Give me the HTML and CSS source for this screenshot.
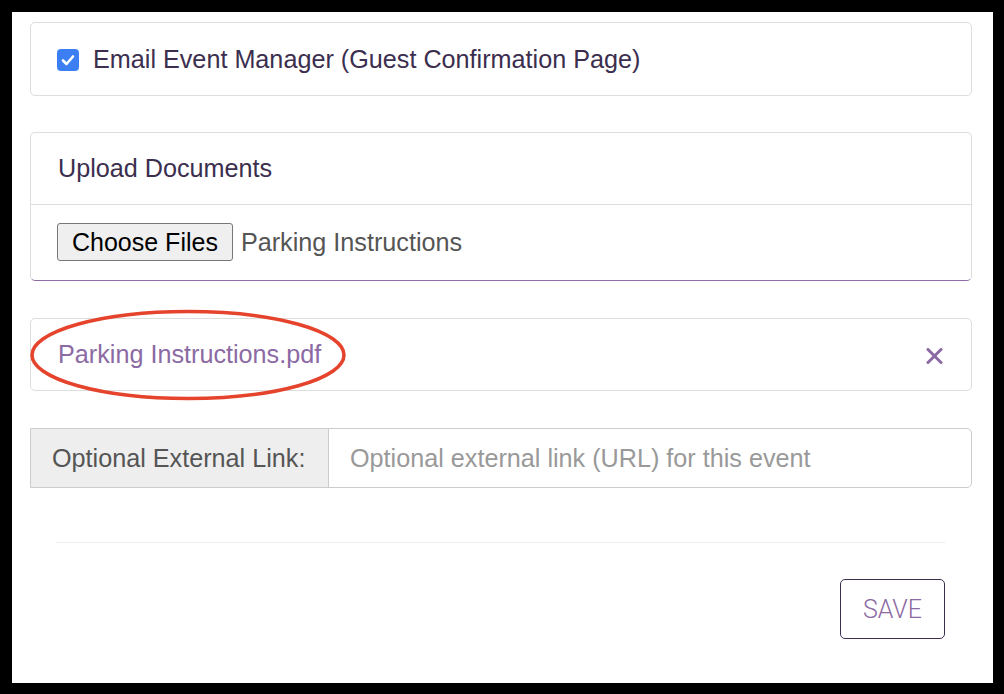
FILE: index.html
```html
<!DOCTYPE html>
<html lang="en">
<head>
  <meta charset="UTF-8" />
  <title>Event Documents</title>
  <link rel="stylesheet" href="styles.css">
</head>
<body>
  <div class="frame">
    <!-- Checkbox card -->
    <div class="card check-card">
      <span class="checkbox">
        <svg width="14" height="12" viewBox="0 0 14 12"><path d="M2 6.5 L5.5 10 L12 2.5" fill="none" stroke="#fff" stroke-width="2.6" stroke-linecap="round" stroke-linejoin="round"/></svg>
      </span>
      <span class="check-label">Email Event Manager (Guest Confirmation Page)</span>
    </div>

    <!-- Upload card -->
    <div class="card upload-card">
      <div class="card-head">Upload Documents</div>
      <div class="card-body">
        <button class="file-btn">Choose Files</button>
        <span class="file-name">Parking Instructions</span>
      </div>
    </div>

    <!-- Uploaded file -->
    <div class="card file-card">
      <a class="file-link" href="#">Parking Instructions.pdf</a>
      <svg class="remove" width="17" height="16" viewBox="0 0 17 16"><path d="M2 1.5 L15 14.5 M15 1.5 L2 14.5" stroke="#8c6aa3" stroke-width="3" stroke-linecap="round"/></svg>
      <svg class="circle" width="318" height="92" viewBox="0 0 318 92"><ellipse cx="159" cy="46" rx="156" ry="43.5" fill="none" stroke="#e5432c" stroke-width="3.5"/></svg>
    </div>

    <!-- External link -->
    <div class="input-group">
      <span class="addon">Optional External Link:</span>
      <span class="url-input">Optional external link (URL) for this event</span>
    </div>

    <div class="footer">
      <hr class="divider">
      <div class="actions">
        <button class="save-btn">SAVE</button>
      </div>
    </div>
  </div>
</body>
</html>
```

FILE: styles.css
```css
/* black frame round the white panel */
body {
  margin: 0;
  background-color: #000;
  font-family: "Liberation Sans", Arial, sans-serif;
}
.frame {
  margin: 12px 11px 11px 12px;
  height: 671px;
  box-sizing: border-box;
  background-color: #fff;
  padding: 10px 21px 0 18px;
}
/* cards */
.card {
  border: 1px solid #ddd;
  border-radius: 5px;
  background-color: #fff;
}
.check-card {
  height: 74px;
  box-sizing: border-box;
  display: flex;
  align-items: center;
  padding-left: 26px;
}
.checkbox {
  width: 22px;
  height: 22px;
  border-radius: 4px;
  background-color: #3b7ff3;
  display: flex;
  align-items: center;
  justify-content: center;
  margin-right: 14px;
  margin-top: 1px;
}
.check-label {
  font-size: 25.2px;
  color: #3b2e4e;
}
.upload-card {
  margin-top: 36px;
  border-bottom: 1px solid #8f6ba7;
}
.card-head {
  height: 72px;
  box-sizing: border-box;
  padding-left: 27px;
  display: flex;
  align-items: center;
  font-size: 25.2px;
  color: #3b2e4e;
  border-bottom: 1px solid #ddd;
}
.card-body {
  height: 75px;
  box-sizing: border-box;
  padding-left: 26px;
  display: flex;
  align-items: center;
  padding-bottom: 1px;
}
.file-btn {
  font-family: "Liberation Sans", Arial, sans-serif;
  font-size: 25px;
  color: #000;
  background-color: #efefef;
  border: 1px solid #777;
  border-radius: 3px;
  height: 38px;
  padding: 0 14px;
  margin: 0 8px 0 0;
}
.file-name {
  font-size: 25.2px;
  color: #555;
}
.file-card {
  position: relative;
  margin-top: 37px;
  height: 73px;
  box-sizing: border-box;
  display: flex;
  align-items: center;
  justify-content: space-between;
  padding: 0 28px 0 27px;
}
.file-link {
  font-size: 25.2px;
  color: #8c6aa3;
  text-decoration: none;
  margin-top: -1px;
}
.remove {
  margin-top: 2px;
}
/* red marker drawn over the link */
.circle {
  position: absolute;
  left: -2px;
  top: -10px;
}
/* input group */
.input-group {
  margin-top: 37px;
  display: flex;
  height: 60px;
  border: 1px solid #ccc;
  border-radius: 0 5px 5px 0;
  box-sizing: border-box;
}
.addon {
  width: 298px;
  box-sizing: border-box;
  background-color: #eee;
  border-right: 1px solid #ccc;
  display: flex;
  align-items: center;
  padding-left: 21px;
  font-size: 25.2px;
  color: #555;
}
.url-input {
  flex: 1;
  display: flex;
  align-items: center;
  padding-left: 21px;
  font-size: 25.2px;
  color: #999;
}
/* footer */
.footer {
  padding: 0 27px 0 26px;
}
.divider {
  border: 0;
  border-top: 1px solid #eee;
  margin: 54px 0 0;
}
.actions {
  display: flex;
  justify-content: flex-end;
  margin-top: 36px;
}
.save-btn {
  width: 105px;
  height: 60px;
  background-color: #fff;
  border: 1px solid #3b2e4e;
  border-radius: 5px;
  color: #8c6aa3;
  font-family: Roboto, "Liberation Sans", sans-serif;
  font-weight: 300;
  font-size: 25px;
  padding: 0;
}
```
